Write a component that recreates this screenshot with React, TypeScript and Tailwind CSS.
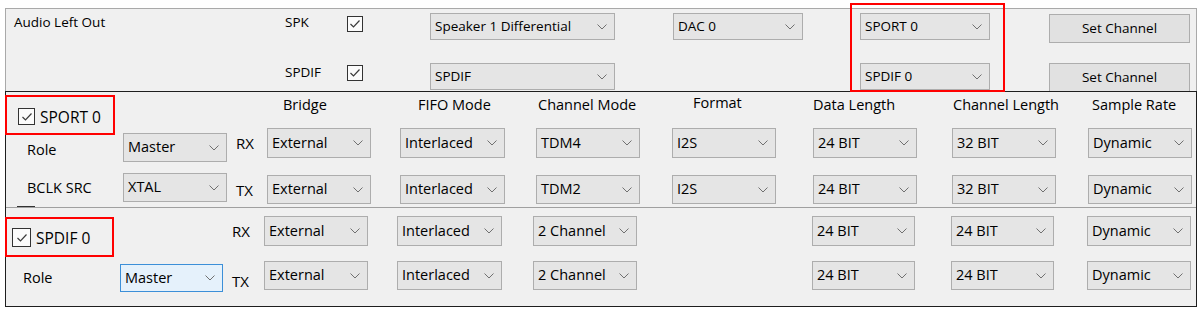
import clsx from "clsx";

type SelectProps = {
    value: string;
    w: string;
    h: string;
    text?: string;
    focus?: boolean;
};

function Select({ value, w, h, text = "text-[14.5px]", focus }: SelectProps) {
    return (
        <div
            className={clsx(
                "flex flex-none items-center justify-between border pl-[4px] pr-[7px] leading-none text-black",
                w,
                h,
                text,
                focus ? "border-[#3c8fd8] bg-[#e5f1fb]" : "border-[#adadad] bg-[#e5e5e5]"
            )}
        >
            <span className="whitespace-nowrap">{value}</span>
            <svg width="10" height="6" viewBox="0 0 10 6" className="flex-none">
                <path d="M0.5 0.5 L5 5 L9.5 0.5" stroke="#707070" strokeWidth="1" fill="none" />
            </svg>
        </div>
    );
}

function Check({ size = "w-[16px] h-[16px]" }: { size?: string }) {
    return (
        <div className={clsx("flex flex-none items-center justify-center border border-[#333333] bg-[#fbfbfb]", size)}>
            <svg width="12" height="10" viewBox="0 0 12 10">
                <path d="M1.5 5 L4.5 8 L10.5 1.5" stroke="#3a3a3a" strokeWidth="1.2" fill="none" />
            </svg>
        </div>
    );
}

function Button({ label, className }: { label: string; className?: string }) {
    return (
        <div
            className={clsx(
                "flex h-[29px] w-[141px] flex-none items-center justify-center border border-[#adadad] bg-[#e1e1e1] text-[13.5px] text-black",
                className
            )}
        >
            {label}
        </div>
    );
}

const sportRows = [
    { io: "RX", bridge: "External", fifo: "Interlaced", mode: "TDM4", format: "I2S", data: "24 BIT", chan: "32 BIT", rate: "Dynamic" },
    { io: "TX", bridge: "External", fifo: "Interlaced", mode: "TDM2", format: "I2S", data: "24 BIT", chan: "32 BIT", rate: "Dynamic" },
];

const spdifRows = [
    { io: "RX", bridge: "External", fifo: "Interlaced", mode: "2 Channel", data: "24 BIT", chan: "24 BIT", rate: "Dynamic" },
    { io: "TX", bridge: "External", fifo: "Interlaced", mode: "2 Channel", data: "24 BIT", chan: "24 BIT", rate: "Dynamic" },
];

export default function App() {
    return (
        <div className="h-[309px] w-[1202px] bg-white pl-[5px] pt-[8px] font-['Open_Sans',sans-serif] text-black">
            <div className="w-[1192px]">
                {/* audio out panel */}
                <div className="relative h-[83px] border-l border-r border-t border-[#a9a9a9] bg-[#f0f0f0] text-[13.5px] leading-[19px]">
                    <div className="flex h-[50px] items-start">
                        <div className="w-[279px] pl-[8px] pt-[4px]">Audio Left Out</div>
                        <div className="w-[62px] pt-[4px]">SPK</div>
                        <div className="w-[83px] pt-[7px]">
                            <Check />
                        </div>
                        <div className="mt-[4px]">
                            <Select value="Speaker 1 Differential" w="w-[185px]" h="h-[27px]" text="text-[13.5px]" />
                        </div>
                        <div className="ml-[58px] mt-[4px]">
                            <Select value="DAC 0" w="w-[130px]" h="h-[27px]" text="text-[13.5px]" />
                        </div>
                        <div className="ml-[57px] mt-[4px]">
                            <Select value="SPORT 0" w="w-[130px]" h="h-[27px]" text="text-[13.5px]" />
                        </div>
                        <Button label="Set Channel" className="ml-[59px] mt-[5px]" />
                    </div>
                    <div className="flex h-[32px] items-start overflow-hidden">
                        <div className="w-[279px]" />
                        <div className="w-[62px] pt-[4px]">SPDIF</div>
                        <div className="w-[83px] pt-[6px]">
                            <Check />
                        </div>
                        <div className="mt-[4px]">
                            <Select value="SPDIF" w="w-[185px]" h="h-[27px]" text="text-[13.5px]" />
                        </div>
                        <div className="ml-[245px] mt-[4px]">
                            <Select value="SPDIF 0" w="w-[130px]" h="h-[27px]" text="text-[13.5px]" />
                        </div>
                        <Button label="Set Channel" className="ml-[59px] mt-[4px]" />
                    </div>
                    <div className="absolute left-[844px] top-[-6px] h-[89px] w-[155px] border-2 border-[#ff0000]" />
                </div>

                {/* port config */}
                <div className="border border-[#1e1e1e] bg-[#f0f0f0] text-[14.5px] leading-[20px]">
                    {/* SPORT */}
                    <div className="flex h-[116px] border-b border-[#a0a0a0]">
                        <div className="w-[230px] flex-none">
                            <div className="ml-[-1px] mt-[3px] flex h-[40px] w-[110px] items-center gap-[5px] border-2 border-[#ff0000] pl-[11px] pt-[3px] text-[15.5px]">
                                <Check size="w-[17px] h-[17px]" />
                                <span>SPORT 0</span>
                            </div>
                            <div className="mt-[-2px] flex h-[29px] items-center">
                                <div className="w-[117px] pl-[21px] pt-[4px]">Role</div>
                                <Select value="Master" w="w-[104px]" h="h-[29px]" />
                            </div>
                            <div className="mt-[11px] flex h-[29px] items-center">
                                <div className="w-[117px] pl-[21px]">BCLK SRC</div>
                                <Select value="XTAL" w="w-[104px]" h="h-[29px]" />
                            </div>
                            <div className="ml-[11px] mt-[4px] h-[1px] w-[18px] bg-[#333333]" />
                        </div>
                        <div className="flex-1">
                            <div className="flex h-[36px] items-start pt-[3px]">
                                <div className="ml-[47px] w-[135px]">Bridge</div>
                                <div className="w-[120px]">FIFO Mode</div>
                                <div className="w-[155px]">Channel Mode</div>
                                <div className="mt-[-2px] w-[120px]">Format</div>
                                <div className="w-[140px]">Data Length</div>
                                <div className="w-[139px]">Channel Length</div>
                                <div>Sample Rate</div>
                            </div>
                            {sportRows.map((r, i) => (
                                <div key={r.io} className={clsx("flex items-center", i === 0 ? "h-[30px]" : "mt-[17px] h-[29px]")}>
                                    <div className="w-[31px] text-[15px]">{r.io}</div>
                                    <Select value={r.bridge} w="w-[104px]" h="h-full" />
                                    <div className="ml-[29px] h-full">
                                        <Select value={r.fifo} w="w-[105px]" h="h-full" />
                                    </div>
                                    <div className="ml-[31px] h-full">
                                        <Select value={r.mode} w="w-[104px]" h="h-full" />
                                    </div>
                                    <div className="ml-[32px] h-full">
                                        <Select value={r.format} w="w-[104px]" h="h-full" />
                                    </div>
                                    <div className="ml-[37px] h-full">
                                        <Select value={r.data} w="w-[104px]" h="h-full" />
                                    </div>
                                    <div className="ml-[35px] h-full">
                                        <Select value={r.chan} w="w-[104px]" h="h-full" />
                                    </div>
                                    <div className="ml-[32px] h-full">
                                        <Select value={r.rate} w="w-[104px]" h="h-full" />
                                    </div>
                                </div>
                            ))}
                        </div>
                    </div>

                    {/* SPDIF */}
                    <div className="flex h-[98px]">
                        <div className="w-[226px] flex-none">
                            <div className="ml-[-1px] mt-[9px] flex h-[40px] w-[109px] items-center gap-[5px] border-2 border-[#ff0000] pl-[5px] pt-[1px] text-[15.5px]">
                                <Check size="w-[19px] h-[19px]" />
                                <span>SPDIF 0</span>
                            </div>
                            <div className="mt-[7px] flex h-[28px] items-center">
                                <div className="w-[114px] pl-[17px]">Role</div>
                                <Select value="Master" w="w-[103px]" h="h-[28px]" focus />
                            </div>
                        </div>
                        <div className="flex-1">
                            {spdifRows.map((r, i) => (
                                <div key={r.io} className={clsx("flex items-center", i === 0 ? "mt-[8px] h-[30px]" : "mt-[15px] h-[29px]")}>
                                    <div className={clsx("w-[32px] text-[15px]", i === 1 && "pt-[10px]")}>{r.io}</div>
                                    <Select value={r.bridge} w="w-[104px]" h="h-full" />
                                    <div className="ml-[29px] h-full">
                                        <Select value={r.fifo} w="w-[105px]" h="h-full" />
                                    </div>
                                    <div className="ml-[31px] h-full">
                                        <Select value={r.mode} w="w-[104px]" h="h-full" />
                                    </div>
                                    <div className="ml-[175px] h-full">
                                        <Select value={r.data} w="w-[103px]" h="h-full" />
                                    </div>
                                    <div className="ml-[36px] h-full">
                                        <Select value={r.chan} w="w-[103px]" h="h-full" />
                                    </div>
                                    <div className="ml-[33px] h-full">
                                        <Select value={r.rate} w="w-[104px]" h="h-full" />
                                    </div>
                                </div>
                            ))}
                        </div>
                    </div>
                </div>
            </div>
        </div>
    );
}
